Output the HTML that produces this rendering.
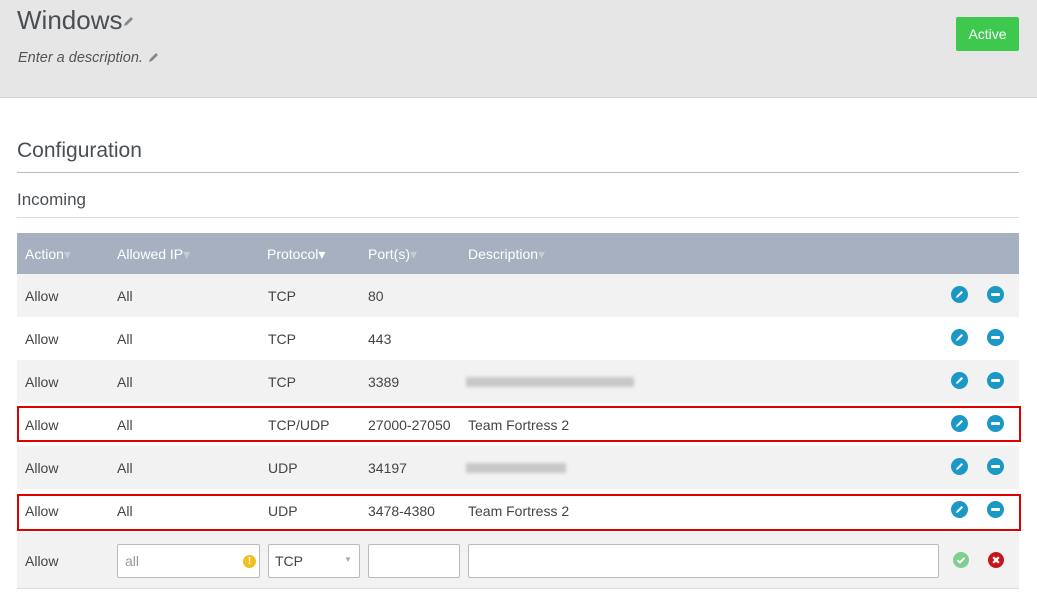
<!DOCTYPE html>
<html><head><style>
*{margin:0;padding:0;box-sizing:border-box}
body{width:1037px;height:605px;background:#fff;font-family:"Liberation Sans",sans-serif;color:#444;position:relative;overflow:hidden;font-size:14px}
.hdr{position:absolute;left:0;top:0;width:1037px;height:98px;background:#e6e6e6;border-bottom:1px solid #d4d4d4}
.a{position:absolute}
.row{position:absolute;left:17px;width:1002px;height:43px}
.c{position:absolute;top:1px;line-height:43px;color:#444}
.h{position:absolute;top:1px;line-height:41px;color:#fff}
.blur{position:absolute;height:10px;background:#c8c8c8;filter:blur(1.5px)}
.red{position:absolute;left:17px;width:1004px;border:2px solid #e00000}
.inp{position:absolute;top:544px;height:34px;background:#fff;border:1px solid #bbb;border-radius:2px}
</style></head><body>
<div class="hdr"></div>
<div class="a" style="left:17px;top:5px;font-size:26px;color:#4a4f55">Windows</div>
<svg class="a" style="left:122px;top:16px" width="12" height="12" viewBox="0 0 12 12"><path d="M2 10 L3 7 L9 1 L11 3 L5 9 Z" fill="#888"/></svg>
<div class="a" style="left:18px;top:50px;font-style:italic;font-size:14.5px;color:#555">Enter a description.</div>
<svg class="a" style="left:147px;top:52px" width="12" height="12" viewBox="0 0 12 12"><path d="M2 10 L3 7 L9 1 L11 3 L5 9 Z" fill="#888"/></svg>
<div class="a" style="left:956px;top:17px;width:63px;height:34px;background:#3ec94e;color:#fff;font-size:14px;line-height:34px;text-align:center;border-radius:2px">Active</div>
<div class="a" style="left:17px;top:139px;font-size:21px;color:#4a4f55">Configuration</div>
<div class="a" style="left:17px;top:172px;width:1002px;height:1px;background:#bbb"></div>
<div class="a" style="left:17px;top:190px;font-size:17px;color:#4a4f55">Incoming</div>
<div class="a" style="left:17px;top:217px;width:1002px;height:1px;background:#ddd"></div>
<div class="a" style="left:17px;top:233px;width:1002px;height:41px;background:#a6b0c0">
<span class="h" style="left:8px">Action<span style="color:#c4cad6">▾</span></span>
<span class="h" style="left:100px">Allowed IP<span style="color:#c4cad6">▾</span></span>
<span class="h" style="left:250px">Protocol▾</span>
<span class="h" style="left:351px">Port(s)<span style="color:#c4cad6">▾</span></span>
<span class="h" style="left:451px">Description<span style="color:#c4cad6">▾</span></span>
</div>

<div class="row" style="top:274px;background:#f2f2f2"><span class="c" style="left:8px">Allow</span><span class="c" style="left:100px">All</span><span class="c" style="left:251px">TCP</span><span class="c" style="left:351px">80</span></div>
<div class="row" style="top:317px;background:#fff"><span class="c" style="left:8px">Allow</span><span class="c" style="left:100px">All</span><span class="c" style="left:251px">TCP</span><span class="c" style="left:351px">443</span></div>
<div class="row" style="top:360px;background:#f2f2f2"><span class="c" style="left:8px">Allow</span><span class="c" style="left:100px">All</span><span class="c" style="left:251px">TCP</span><span class="c" style="left:351px">3389</span><div class="blur" style="left:449px;top:17px;width:168px"></div></div>
<div class="row" style="top:403px;background:#fff"><span class="c" style="left:8px">Allow</span><span class="c" style="left:100px">All</span><span class="c" style="left:251px">TCP/UDP</span><span class="c" style="left:351px">27000-27050</span><span class="c" style="left:451px">Team Fortress 2</span></div>
<div class="row" style="top:446px;background:#f2f2f2"><span class="c" style="left:8px">Allow</span><span class="c" style="left:100px">All</span><span class="c" style="left:251px">UDP</span><span class="c" style="left:351px">34197</span><div class="blur" style="left:449px;top:17px;width:100px"></div></div>
<div class="row" style="top:489px;background:#fff"><span class="c" style="left:8px">Allow</span><span class="c" style="left:100px">All</span><span class="c" style="left:251px">UDP</span><span class="c" style="left:351px">3478-4380</span><span class="c" style="left:451px">Team Fortress 2</span></div>
<div class="row" style="top:532px;height:57px;background:#f2f2f2;border-bottom:1px solid #ddd"><span class="c" style="left:8px;line-height:57px">Allow</span></div>

<div class="red" style="top:406px;height:36px"></div>
<div class="red" style="top:494px;height:37px"></div>

<div class="inp" style="left:117px;width:143px"><span class="a" style="left:7px;top:8px;color:#999">all</span><div class="a" style="left:125px;top:10px;width:13px;height:13px;border-radius:50%;background:#f0c020;color:#fff;font-size:10px;font-weight:bold;text-align:center;line-height:13px">!</div></div>
<div class="inp" style="left:268px;width:92px"><span class="a" style="left:6px;top:8px;color:#444">TCP</span><span class="a" style="left:75px;top:10px;color:#aaa;font-size:8px">▼</span></div>
<div class="inp" style="left:368px;width:92px"></div>
<div class="inp" style="left:468px;width:471px"></div>

<div class="a" style="left:951px;top:286px"><svg width="17" height="17" viewBox="0 0 17 17"><circle cx="8.5" cy="8.5" r="8.5" fill="#1b98c6"/><path d="M5 12 L5.6 10 L10.5 5 L12 6.5 L7 11.4 Z" fill="#fff"/></svg></div>
<div class="a" style="left:987px;top:286px"><svg width="17" height="17" viewBox="0 0 17 17"><circle cx="8.5" cy="8.5" r="8.5" fill="#1b98c6"/><rect x="4" y="7" width="9" height="3" rx="1" fill="#fff"/></svg></div>
<div class="a" style="left:951px;top:329px"><svg width="17" height="17" viewBox="0 0 17 17"><circle cx="8.5" cy="8.5" r="8.5" fill="#1b98c6"/><path d="M5 12 L5.6 10 L10.5 5 L12 6.5 L7 11.4 Z" fill="#fff"/></svg></div>
<div class="a" style="left:987px;top:329px"><svg width="17" height="17" viewBox="0 0 17 17"><circle cx="8.5" cy="8.5" r="8.5" fill="#1b98c6"/><rect x="4" y="7" width="9" height="3" rx="1" fill="#fff"/></svg></div>
<div class="a" style="left:951px;top:372px"><svg width="17" height="17" viewBox="0 0 17 17"><circle cx="8.5" cy="8.5" r="8.5" fill="#1b98c6"/><path d="M5 12 L5.6 10 L10.5 5 L12 6.5 L7 11.4 Z" fill="#fff"/></svg></div>
<div class="a" style="left:987px;top:372px"><svg width="17" height="17" viewBox="0 0 17 17"><circle cx="8.5" cy="8.5" r="8.5" fill="#1b98c6"/><rect x="4" y="7" width="9" height="3" rx="1" fill="#fff"/></svg></div>
<div class="a" style="left:951px;top:415px"><svg width="17" height="17" viewBox="0 0 17 17"><circle cx="8.5" cy="8.5" r="8.5" fill="#1b98c6"/><path d="M5 12 L5.6 10 L10.5 5 L12 6.5 L7 11.4 Z" fill="#fff"/></svg></div>
<div class="a" style="left:987px;top:415px"><svg width="17" height="17" viewBox="0 0 17 17"><circle cx="8.5" cy="8.5" r="8.5" fill="#1b98c6"/><rect x="4" y="7" width="9" height="3" rx="1" fill="#fff"/></svg></div>
<div class="a" style="left:951px;top:458px"><svg width="17" height="17" viewBox="0 0 17 17"><circle cx="8.5" cy="8.5" r="8.5" fill="#1b98c6"/><path d="M5 12 L5.6 10 L10.5 5 L12 6.5 L7 11.4 Z" fill="#fff"/></svg></div>
<div class="a" style="left:987px;top:458px"><svg width="17" height="17" viewBox="0 0 17 17"><circle cx="8.5" cy="8.5" r="8.5" fill="#1b98c6"/><rect x="4" y="7" width="9" height="3" rx="1" fill="#fff"/></svg></div>
<div class="a" style="left:951px;top:501px"><svg width="17" height="17" viewBox="0 0 17 17"><circle cx="8.5" cy="8.5" r="8.5" fill="#1b98c6"/><path d="M5 12 L5.6 10 L10.5 5 L12 6.5 L7 11.4 Z" fill="#fff"/></svg></div>
<div class="a" style="left:987px;top:501px"><svg width="17" height="17" viewBox="0 0 17 17"><circle cx="8.5" cy="8.5" r="8.5" fill="#1b98c6"/><rect x="4" y="7" width="9" height="3" rx="1" fill="#fff"/></svg></div>
<div class="a" style="left:953px;top:552px"><svg width="16" height="16" viewBox="0 0 16 16"><circle cx="8" cy="8" r="8" fill="#7fd08f"/><path d="M4.5 8.2 L7 10.5 L11.5 5.8" stroke="#fff" stroke-width="2" fill="none"/></svg></div>
<div class="a" style="left:988px;top:552px"><svg width="16" height="16" viewBox="0 0 16 16"><circle cx="8" cy="8" r="8" fill="#c8141c"/><path d="M5.2 5.2 L10.8 10.8 M10.8 5.2 L5.2 10.8" stroke="#fff" stroke-width="2.2"/></svg></div>
</body></html>
